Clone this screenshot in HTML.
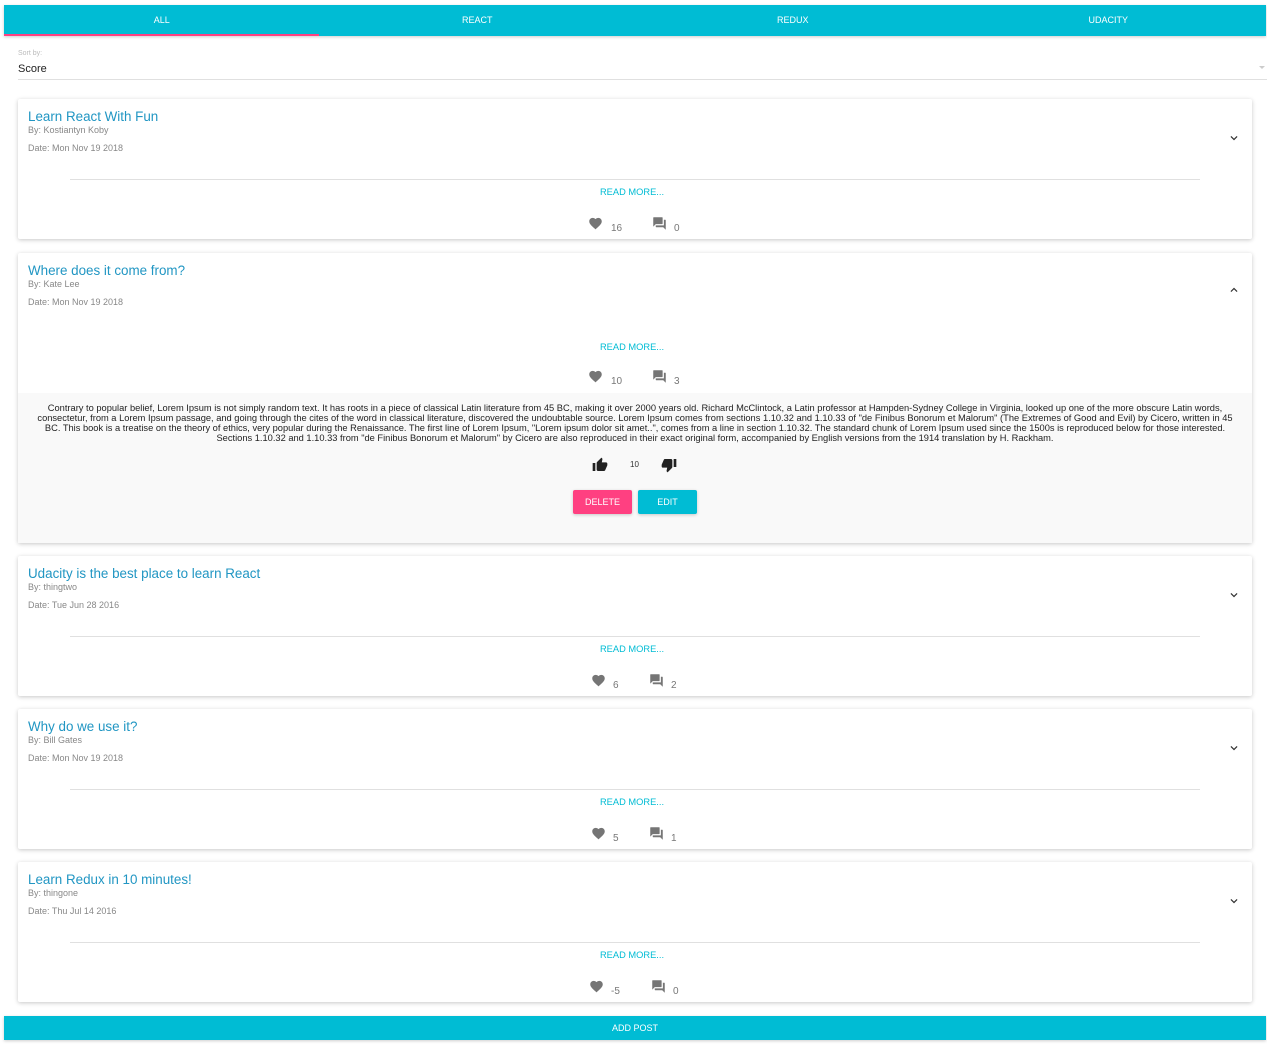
<!DOCTYPE html>
<html><head><meta charset="utf-8"><style>
*{margin:0;padding:0;box-sizing:border-box}
body{width:1267px;height:1062px;background:#fff;font-family:"Liberation Sans",Arial,sans-serif;position:relative;overflow:hidden}
.abs{position:absolute}
.tabs{left:4px;top:5px;width:1262px;height:31px;background:#00bcd4;box-shadow:0 1px 3px rgba(0,0,0,.2)}
.tab{position:absolute;top:0;height:31px;line-height:31px;width:315.5px;text-align:center;color:#fff;font-size:9px}
.ind{position:absolute;left:0;bottom:0;width:315px;height:2px;background:#ff4081}
.card{position:absolute;left:18px;width:1234px;background:#fff;box-shadow:0 1px 4px rgba(0,0,0,.22);border-radius:2px}
.t{position:absolute;left:10px;top:10px;font-size:13.4px;color:#2196c3}
.by{position:absolute;left:10px;top:26px;font-size:9px;color:#888}
.dt{position:absolute;left:10px;top:44px;font-size:9px;color:#888}
.hr{position:absolute;left:52px;width:1130px;top:80px;height:1px;background:#e0e0e0}
.rm{position:absolute;left:-3px;width:1234px;text-align:center;top:88px;font-size:9.3px;color:#00bcd4}
.ic{position:absolute;top:117px}
.n{position:absolute;font-size:10px;color:#777}
.chev{position:absolute;left:1209px;top:32px}
</style></head><body>
<div class="abs tabs">
<div class="tab" style="left:0">ALL</div><div class="tab" style="left:315.5px">REACT</div><div class="tab" style="left:631px">REDUX</div><div class="tab" style="left:946.5px">UDACITY</div>
<div class="ind"></div></div>
<div class="abs" style="left:18px;top:50px;font-size:7px;color:#bbb">Sort by:</div>
<div class="abs" style="left:18px;top:63px;font-size:11px;color:#222">Score</div>
<div class="abs" style="left:18px;top:79px;width:1249px;height:1px;background:#e0e0e0"></div>
<div class="abs" style="left:1259px;top:66px;width:0;height:0;border-left:3px solid transparent;border-right:3px solid transparent;border-top:3px solid #ccc"></div>

<svg width="0" height="0" style="position:absolute"><defs>
<symbol id="heart" viewBox="0 0 24 24"><path fill="#757575" d="M12 21.35l-1.45-1.32C5.4 15.36 2 12.28 2 8.5 2 5.42 4.42 3 7.5 3c1.74 0 3.41.81 4.5 2.090C13.09 3.81 14.76 3 16.5 3 19.58 3 22 5.42 22 8.5c0 3.78-3.4 6.86-8.55 11.54L12 21.35z"/></symbol>
<symbol id="cmt" viewBox="0 0 24 24"><path fill="#757575" d="M21 6h-2v9H6v2c0 .55.45 1 1 1h11l4 4V7c0-.55-.45-1-1-1zm-4 6V3c0-.55-.45-1-1-1H3c-.55 0-1 .45-1 1v14l4-4h10c.55 0 1-.45 1-1z"/></symbol>
<symbol id="down" viewBox="0 0 24 24"><path fill="#333" d="M7.41 8.59L12 13.17l4.59-4.58L18 10l-6 6-6-6 1.41-1.41z"/></symbol>
<symbol id="up" viewBox="0 0 24 24"><path fill="#333" d="M7.41 15.41L12 10.83l4.59 4.58L18 14l-6-6-6 6z"/></symbol>
<symbol id="tu" viewBox="0 0 24 24"><path fill="#222" d="M1 21h4V9H1v12zm22-11c0-1.1-.9-2-2-2h-6.31l.95-4.57.03-.32c0-.41-.17-.79-.44-1.06L14.17 1 7.59 7.59C7.22 7.95 7 8.45 7 9v10c0 1.1.9 2 2 2h9c.83 0 1.54-.5 1.84-1.22l3.02-7.05c.09-.23.14-.47.14-.73v-2z"/></symbol>
<symbol id="td" viewBox="0 0 24 24"><path fill="#222" d="M15 3H6c-.83 0-1.54.5-1.84 1.22l-3.02 7.05c-.09.23-.14.47-.14.73v2c0 1.1.9 2 2 2h6.31l-.95 4.57-.03.32c0 .41.17.79.44 1.06L9.83 23l6.59-6.59c.36-.36.58-.86.58-1.41V5c0-1.1-.9-2-2-2zm4 0v12h4V3h-4z"/></symbol>
</defs></svg>

<div class="card" style="top:99px;height:140px">
<div class="t">Learn React With Fun</div><div class="by">By: Kostiantyn Koby</div><div class="dt">Date: Mon Nov 19 2018</div>
<svg class="chev" width="14" height="14"><use href="#down"/></svg>
<div class="hr"></div><div class="rm">READ MORE...</div>
<svg class="ic" style="left:570px" width="15" height="15"><use href="#heart"/></svg><span class="n" style="left:593px;top:124px">16</span>
<svg class="ic" style="left:634px" width="15" height="15"><use href="#cmt"/></svg><span class="n" style="left:656px;top:124px">0</span>
</div>

<div class="card" style="top:253px;height:290px">
<div class="t">Where does it come from?</div><div class="by">By: Kate Lee</div><div class="dt">Date: Mon Nov 19 2018</div>
<svg class="chev" width="14" height="14" style="top:30px"><use href="#up"/></svg>
<div class="rm" style="top:89px">READ MORE...</div>
<svg class="ic" style="left:570px;top:116px" width="15" height="15"><use href="#heart"/></svg><span class="n" style="left:593px;top:123px">10</span>
<svg class="ic" style="left:634px;top:116px" width="15" height="15"><use href="#cmt"/></svg><span class="n" style="left:656px;top:123px">3</span>
<div style="position:absolute;left:0;top:140px;width:1234px;height:150px;background:#f9f9f9">
<div style="position:absolute;left:15px;width:1204px;top:10px;text-align:center;font-size:9.3px;line-height:10px;color:#222">Contrary to popular belief, Lorem Ipsum is not simply random text. It has roots in a piece of classical Latin literature from 45 BC, making it over 2000 years old. Richard McClintock, a Latin professor at Hampden-Sydney College in Virginia, looked up one of the more obscure Latin words, consectetur, from a Lorem Ipsum passage, and going through the cites of the word in classical literature, discovered the undoubtable source. Lorem Ipsum comes from sections 1.10.32 and 1.10.33 of "de Finibus Bonorum et Malorum" (The Extremes of Good and Evil) by Cicero, written in 45 BC. This book is a treatise on the theory of ethics, very popular during the Renaissance. The first line of Lorem Ipsum, "Lorem ipsum dolor sit amet..", comes from a line in section 1.10.32. The standard chunk of Lorem Ipsum used since the 1500s is reproduced below for those interested. Sections 1.10.32 and 1.10.33 from "de Finibus Bonorum et Malorum" by Cicero are also reproduced in their exact original form, accompanied by English versions from the 1914 translation by H. Rackham.</div>
<svg style="position:absolute;left:574px;top:64px" width="16" height="16"><use href="#tu"/></svg>
<span style="position:absolute;left:612px;top:67px;font-size:8px;color:#333">10</span>
<svg style="position:absolute;left:643px;top:64px" width="16" height="16"><use href="#td"/></svg>
<div style="position:absolute;left:555px;top:97px;width:59px;height:24px;background:#ff4081;color:#fff;font-size:9px;line-height:24px;text-align:center;border-radius:2px;box-shadow:0 1px 3px rgba(0,0,0,.2)">DELETE</div>
<div style="position:absolute;left:620px;top:97px;width:59px;height:24px;background:#00bcd4;color:#fff;font-size:9px;line-height:24px;text-align:center;border-radius:2px;box-shadow:0 1px 3px rgba(0,0,0,.2)">EDIT</div>
</div></div>

<div class="card" style="top:556px;height:140px">
<div class="t">Udacity is the best place to learn React</div><div class="by">By: thingtwo</div><div class="dt">Date: Tue Jun 28 2016</div>
<svg class="chev" width="14" height="14"><use href="#down"/></svg>
<div class="hr"></div><div class="rm">READ MORE...</div>
<svg class="ic" style="left:573px" width="15" height="15"><use href="#heart"/></svg><span class="n" style="left:595px;top:124px">6</span>
<svg class="ic" style="left:631px" width="15" height="15"><use href="#cmt"/></svg><span class="n" style="left:653px;top:124px">2</span>
</div>

<div class="card" style="top:709px;height:140px">
<div class="t">Why do we use it?</div><div class="by">By: Bill Gates</div><div class="dt">Date: Mon Nov 19 2018</div>
<svg class="chev" width="14" height="14"><use href="#down"/></svg>
<div class="hr"></div><div class="rm">READ MORE...</div>
<svg class="ic" style="left:573px" width="15" height="15"><use href="#heart"/></svg><span class="n" style="left:595px;top:124px">5</span>
<svg class="ic" style="left:631px" width="15" height="15"><use href="#cmt"/></svg><span class="n" style="left:653px;top:124px">1</span>
</div>

<div class="card" style="top:862px;height:140px">
<div class="t">Learn Redux in 10 minutes!</div><div class="by">By: thingone</div><div class="dt">Date: Thu Jul 14 2016</div>
<svg class="chev" width="14" height="14"><use href="#down"/></svg>
<div class="hr"></div><div class="rm">READ MORE...</div>
<svg class="ic" style="left:571px" width="15" height="15"><use href="#heart"/></svg><span class="n" style="left:593px;top:124px">-5</span>
<svg class="ic" style="left:633px" width="15" height="15"><use href="#cmt"/></svg><span class="n" style="left:655px;top:124px">0</span>
</div>

<div class="abs" style="left:4px;top:1016px;width:1262px;height:24px;background:#00bcd4;color:#fff;font-size:9px;line-height:24px;text-align:center;box-shadow:0 1px 3px rgba(0,0,0,.2)">ADD POST</div>
</body></html>
